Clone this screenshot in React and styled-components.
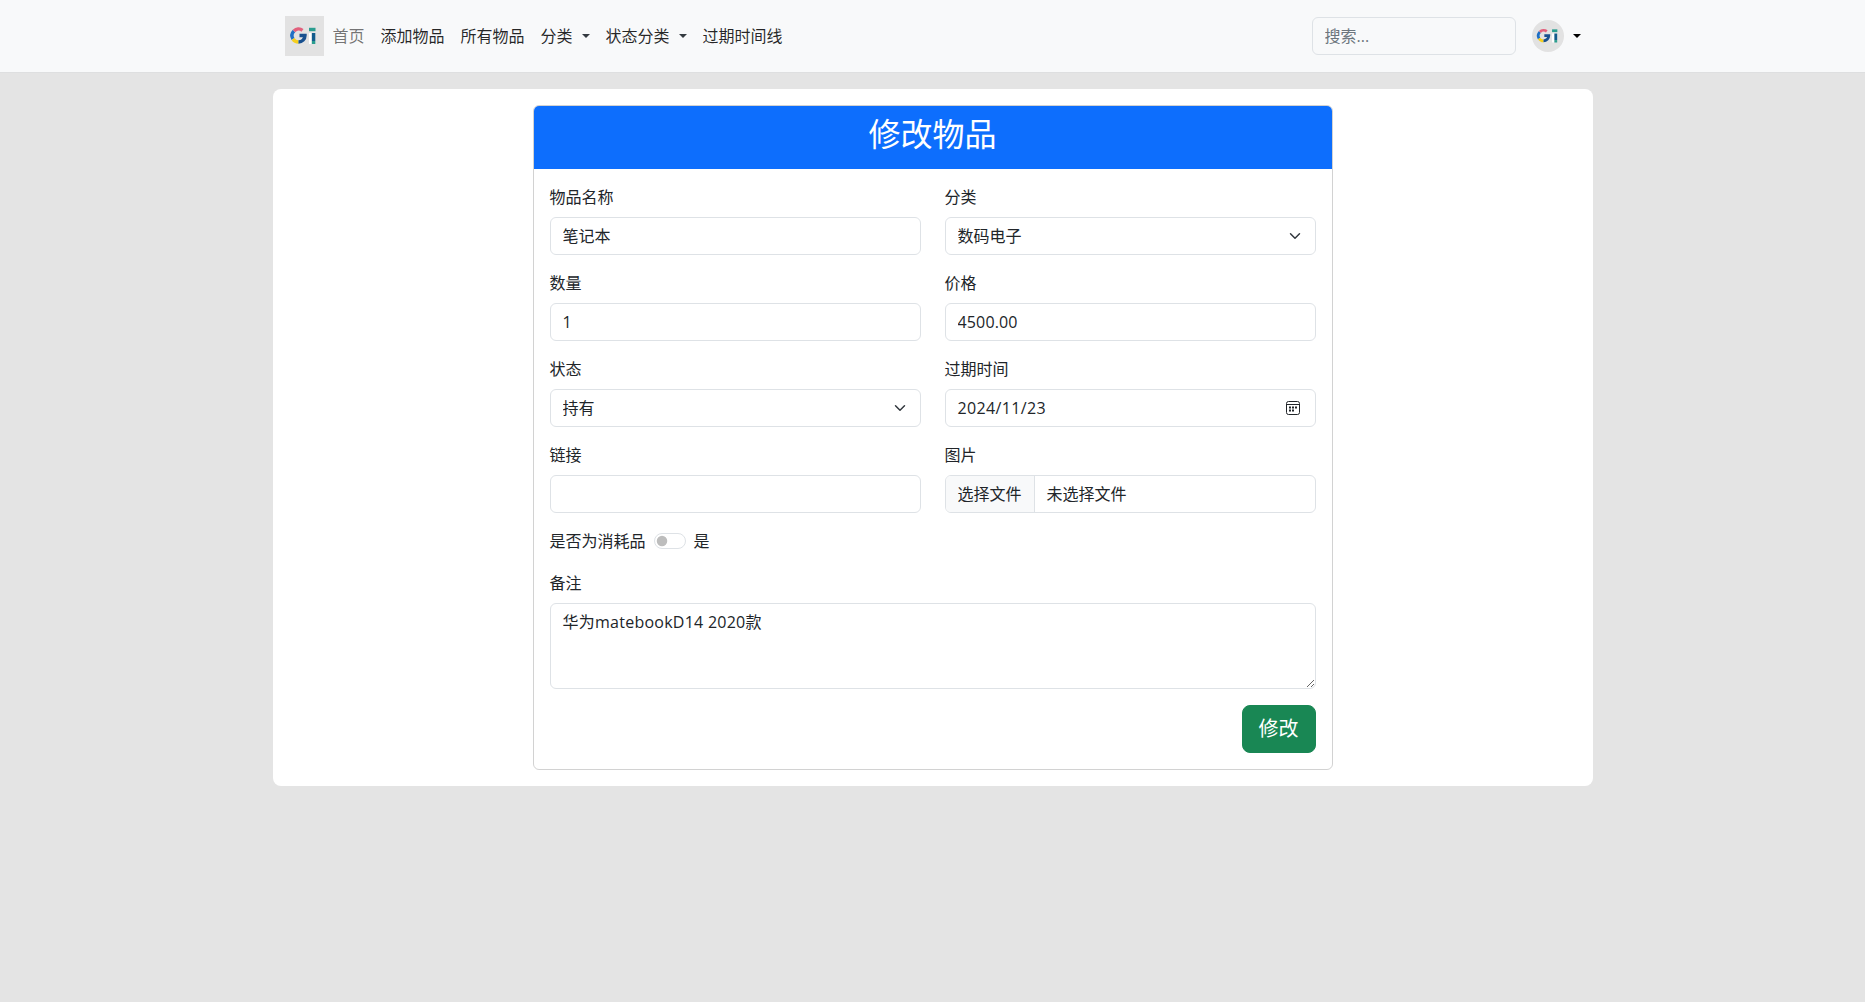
import styled, { createGlobalStyle } from 'styled-components';

const GlobalStyle = createGlobalStyle`
  * {
    box-sizing: border-box;
  }

  html,
  body {
    margin: 0;
    min-height: 100%;
  }

  body {
    background-color: #e4e4e4;
    color: #212529;
    font-family: 'Open Sans', 'Noto Sans CJK SC', sans-serif;
    font-size: 16px;
    line-height: 1.5;
  }
`;

const chevron = `url("data:image/svg+xml,%3csvg xmlns='http://www.w3.org/2000/svg' viewBox='0 0 16 16'%3e%3cpath fill='none' stroke='%23343a40' stroke-linecap='round' stroke-linejoin='round' stroke-width='2' d='m2 5 6 6 6-6'/%3e%3c/svg%3e")`;
const knob = `url("data:image/svg+xml,%3csvg xmlns='http://www.w3.org/2000/svg' viewBox='-4 -4 8 8'%3e%3ccircle r='3' fill='%23bdbdbd'/%3e%3c/svg%3e")`;

const Navbar = styled.nav`
  height: 73px;
  background-color: #f8f9fa;
  border-bottom: 1px solid #dedfe0;
`;

const NavInner = styled.div`
  width: 1320px;
  height: 100%;
  margin: 0 auto;
  padding: 0 12px;
  display: flex;
  align-items: center;
`;

const Brand = styled.div`
  width: 39px;
  height: 40px;
  margin-right: 1px;
  background-color: #e2e2e2;
  display: flex;
  align-items: center;
  justify-content: center;
`;

const NavLinks = styled.div`
  display: flex;
  align-items: center;
  flex-grow: 1;
`;

const NavLink = styled.a`
  padding: 8px;
  color: ${(p) => (p.$active ? 'rgba(0, 0, 0, 0.55)' : 'rgba(0, 0, 0, 0.85)')};
  white-space: nowrap;
  display: flex;
  align-items: center;
`;

const Caret = styled.span`
  display: inline-block;
  margin-left: ${(p) => p.$gap}px;
  border-top: 4.5px solid ${(p) => p.$color};
  border-left: 4px solid transparent;
  border-right: 4px solid transparent;
`;

const SearchInput = styled.input`
  width: 204px;
  height: 38px;
  padding: 6px 12px;
  border: 1px solid #dee2e6;
  border-radius: 6px;
  background-color: transparent;
  color: #212529;
  font: inherit;

  &::placeholder {
    color: #6c757d;
  }
`;

const UserMenu = styled.div`
  margin-left: 16px;
  display: flex;
  align-items: center;
`;

const Avatar = styled.div`
  width: 32px;
  height: 32px;
  border-radius: 50%;
  background-color: #e2e2e2;
  display: flex;
  align-items: center;
  justify-content: center;
`;

const Main = styled.main`
  width: 1320px;
  margin: 16px auto 0;
  padding: 16px 260px;
  background-color: #fff;
  border-radius: 8px;
`;

const Card = styled.section`
  border: 1px solid rgba(0, 0, 0, 0.175);
  border-radius: 6px;
  overflow: hidden;
`;

const CardHeader = styled.header`
  height: 63px;
  padding: 9px 16px 0;
  background-color: #0d6efd;
`;

const Title = styled.h2`
  margin: 0;
  color: #fff;
  font-size: 32px;
  font-weight: 400;
  line-height: 1.2;
  text-align: center;
`;

const CardBody = styled.form`
  padding: 16px;
  display: flex;
  flex-direction: column;
`;

const FieldGrid = styled.div`
  display: grid;
  grid-template-columns: 1fr 1fr;
  column-gap: 24px;
  row-gap: 16px;
`;

const Field = styled.div`
  display: flex;
  flex-direction: column;
  min-width: 0;
`;

const Label = styled.label`
  height: 24px;
  margin-bottom: 8px;
`;

const Input = styled.input`
  width: 100%;
  height: 38px;
  padding: ${(p) => (p.$lift ? '5px 12px 7px' : '6px 12px')};
  border: 1px solid #dee2e6;
  border-radius: 6px;
  background-color: #fff;
  color: #212529;
  font: inherit;
  letter-spacing: ${(p) => p.$tracking || 0}px;
`;

const Select = styled.select`
  width: 100%;
  height: 38px;
  padding: 6px 36px 6px 12px;
  border: 1px solid #dee2e6;
  border-radius: 6px;
  background: #fff ${chevron} no-repeat right 12px center / 16px 12px;
  color: #212529;
  font: inherit;
  appearance: none;
`;

const DateBox = styled.div`
  height: 38px;
  padding: 0 15px 0 12px;
  border: 1px solid #dee2e6;
  border-radius: 6px;
  letter-spacing: 0.35px;
  display: flex;
  align-items: center;
  justify-content: space-between;
`;

const FileBox = styled.div`
  height: 38px;
  border: 1px solid #dee2e6;
  border-radius: 6px;
  display: flex;
  align-items: center;
  overflow: hidden;
`;

const FileButton = styled.span`
  height: 100%;
  padding: 0 12px;
  background-color: #f8f9fa;
  border-right: 1px solid #dee2e6;
  display: flex;
  align-items: center;
`;

const FileName = styled.span`
  padding: 0 12px;
`;

const SwitchRow = styled.div`
  height: 24px;
  margin: 16px 0 18px;
  display: flex;
  align-items: center;
  gap: 8px;
`;

const Switch = styled.input`
  width: 32px;
  height: 16px;
  margin: 0;
  border: 1px solid #dee2e6;
  border-radius: 16px;
  background: #fff ${knob} no-repeat left center / contain;
  appearance: none;
`;

const TextArea = styled.textarea`
  display: block;
  width: 100%;
  height: 86px;
  padding: 6px 12px;
  border: 1px solid #dee2e6;
  border-radius: 6px;
  color: #212529;
  font: inherit;
  letter-spacing: 0.25px;
`;

const Actions = styled.div`
  margin-top: 16px;
  display: flex;
  justify-content: flex-end;
`;

const SubmitButton = styled.button`
  height: 48px;
  padding: 0 16px;
  border: 1px solid #198754;
  border-radius: 8px;
  background-color: #198754;
  color: #fff;
  font: inherit;
  font-size: 20px;
`;

function Logo({ size }) {
  return (
    <svg width={size} height={size} viewBox="0 0 32 32" fill="none" strokeWidth="3.4">
      <path d="M6 11 A6.5 6.5 0 0 0 5 19" stroke="#1f6fc4" />
      <path d="M5 19 A6.5 6.5 0 0 0 10.5 22" stroke="#f5cf1e" />
      <path d="M6 11 A6.5 6.5 0 0 1 14.5 10.3" stroke="#e2607c" />
      <path d="M10.5 22 A6.5 6.5 0 0 0 17 15.5 H11.5" stroke="#17508f" />
      <path d="M21 9.5 H27.5" stroke="#2a9d8f" />
      <path d="M22.2 13 V24" stroke="#ffffff" strokeWidth="2.4" />
      <path d="M25.6 13 V21" stroke="#125b8c" />
      <path d="M25.6 21 V24" stroke="#2a9d8f" />
    </svg>
  );
}

function CalendarIcon() {
  return (
    <svg width="14" height="14" viewBox="0 0 14 14" fill="none" stroke="#212529">
      <rect x="0.5" y="0.5" width="13" height="13" rx="2" />
      <path d="M0.5 3.5 H13.5" />
      <path d="M3 6.5 H5 M6 6.5 H8 M9 6.5 H11 M3 9.5 H5 M6 9.5 H8" strokeWidth="2" />
    </svg>
  );
}

export default function App() {
  return (
    <>
      <GlobalStyle />
      <Navbar>
        <NavInner>
          <Brand>
            <Logo size={32} />
          </Brand>
          <NavLinks>
            <NavLink $active>首页</NavLink>
            <NavLink>添加物品</NavLink>
            <NavLink>所有物品</NavLink>
            <NavLink>
              分类
              <Caret $gap={9} $color="#343a40" />
            </NavLink>
            <NavLink>
              状态分类
              <Caret $gap={9} $color="#343a40" />
            </NavLink>
            <NavLink>过期时间线</NavLink>
          </NavLinks>
          <SearchInput placeholder="搜索..." />
          <UserMenu>
            <Avatar>
              <Logo size={26} />
            </Avatar>
            <Caret $gap={9} $color="#000" />
          </UserMenu>
        </NavInner>
      </Navbar>
      <Main>
        <Card>
          <CardHeader>
            <Title>修改物品</Title>
          </CardHeader>
          <CardBody>
            <FieldGrid>
              <Field>
                <Label>物品名称</Label>
                <Input defaultValue="笔记本" $lift />
              </Field>
              <Field>
                <Label>分类</Label>
                <Select defaultValue="数码电子">
                  <option>数码电子</option>
                </Select>
              </Field>
              <Field>
                <Label>数量</Label>
                <Input defaultValue="1" />
              </Field>
              <Field>
                <Label>价格</Label>
                <Input defaultValue="4500.00" $tracking={0.15} />
              </Field>
              <Field>
                <Label>状态</Label>
                <Select defaultValue="持有">
                  <option>持有</option>
                </Select>
              </Field>
              <Field>
                <Label>过期时间</Label>
                <DateBox>
                  2024/11/23
                  <CalendarIcon />
                </DateBox>
              </Field>
              <Field>
                <Label>链接</Label>
                <Input />
              </Field>
              <Field>
                <Label>图片</Label>
                <FileBox>
                  <FileButton>选择文件</FileButton>
                  <FileName>未选择文件</FileName>
                </FileBox>
              </Field>
            </FieldGrid>
            <SwitchRow>
              是否为消耗品
              <Switch type="checkbox" />
              是
            </SwitchRow>
            <Field>
              <Label>备注</Label>
              <TextArea defaultValue="华为matebookD14 2020款" />
            </Field>
            <Actions>
              <SubmitButton type="button">修改</SubmitButton>
            </Actions>
          </CardBody>
        </Card>
      </Main>
    </>
  );
}
